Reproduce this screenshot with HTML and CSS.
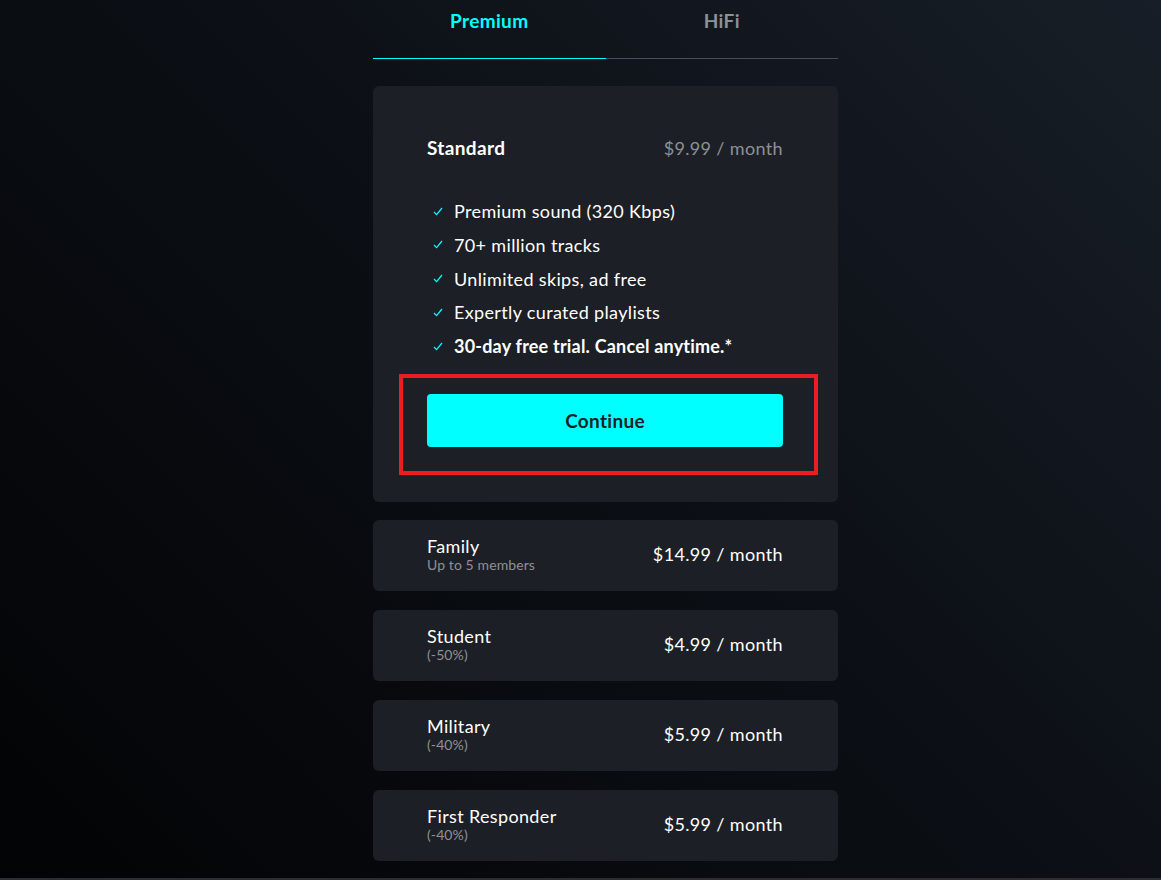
FILE: index.html
```html
<!DOCTYPE html>
<html lang="en">
<head>
    <meta charset="UTF-8">
    <meta name="viewport" content="width=device-width, initial-scale=1.0">
    <title>Choose a plan</title>
    <link rel="stylesheet" href="styles.css">
</head>
<body>

    <main class="plans">
        <nav class="tabs">
            <div class="tab active">Premium</div>
            <div class="tab">HiFi</div>
        </nav>

        <section class="card open">
            <div class="card-head">
                <span class="plan-name">Standard</span>
                <span class="plan-price muted">$9.99 / month</span>
            </div>

            <ul class="features">
                <li><svg class="check" viewBox="0 0 10 9"><polyline points="1,5 3.6,7.6 9,1"/></svg>Premium sound (320 Kbps)</li>
                <li><svg class="check" viewBox="0 0 10 9"><polyline points="1,5 3.6,7.6 9,1"/></svg>70+ million tracks</li>
                <li><svg class="check" viewBox="0 0 10 9"><polyline points="1,5 3.6,7.6 9,1"/></svg>Unlimited skips, ad free</li>
                <li><svg class="check" viewBox="0 0 10 9"><polyline points="1,5 3.6,7.6 9,1"/></svg>Expertly curated playlists</li>
                <li class="strong"><svg class="check" viewBox="0 0 10 9"><polyline points="1,5 3.6,7.6 9,1"/></svg>30-day free trial. Cancel anytime.*</li>
            </ul>

            <button class="continue-btn">Continue</button>
            <div class="highlight"></div>
        </section>

        <section class="card row">
            <div>
                <div class="plan-title">Family</div>
                <div class="plan-sub">Up to 5 members</div>
            </div>
            <span class="plan-price">$14.99 / month</span>
        </section>

        <section class="card row">
            <div>
                <div class="plan-title">Student</div>
                <div class="plan-sub">(-50%)</div>
            </div>
            <span class="plan-price">$4.99 / month</span>
        </section>

        <section class="card row">
            <div>
                <div class="plan-title">Military</div>
                <div class="plan-sub">(-40%)</div>
            </div>
            <span class="plan-price">$5.99 / month</span>
        </section>

        <section class="card row">
            <div>
                <div class="plan-title">First Responder</div>
                <div class="plan-sub">(-40%)</div>
            </div>
            <span class="plan-price">$5.99 / month</span>
        </section>
    </main>

</body>
</html>
```

FILE: styles.css
```css
html {
    background: linear-gradient(225deg, #181e27 0%, #0c1016 45%, #020304 100%);
    min-height: 100%;
}
body {
    font-family: Lato, "Noto Sans", sans-serif;
    letter-spacing: 0.35px;
    margin: 0;
    min-height: 100vh;
    box-sizing: border-box;
    border-bottom: 2px solid #2b2d31;
    color: white;
    display: flex;
    justify-content: center;
    padding-left: 50px;
}
.plans {
    width: 465px;
}
.tabs {
    display: flex;
    border-bottom: 1px solid #4a4d55;
}
.tab {
    flex: 1;
    text-align: center;
    font-size: 19px;
    font-weight: bold;
    color: #8e9196;
    padding: 10px 0 26px;
    margin-bottom: -1px;
    border-bottom: 1px solid transparent;
    line-height: 22px;
}
.tab.active {
    color: #00ffff;
    border-bottom-color: #00ffff;
}
.card {
    background: #1d1f26;
    border-radius: 6px;
    margin-top: 18px;
    box-sizing: border-box;
    padding: 0 55px 0 54px;
}
.card.open {
    position: relative;
    margin-top: 27px;
    padding-top: 51px;
    padding-bottom: 55px;
}
.card-head {
    display: flex;
    justify-content: space-between;
    font-size: 18px;
    line-height: 22px;
}
.plan-name {
    font-weight: bold;
    font-size: 19px;
}
.muted {
    color: #8e9196;
}
.features {
    list-style: none;
    margin: 41px 0 0;
    padding: 0;
}
.features li {
    display: flex;
    align-items: center;
    font-size: 18px;
    line-height: 22px;
    margin-bottom: 11.75px;
}
.features li.strong {
    font-weight: bold;
    letter-spacing: 0.2px;
}
.check {
    width: 10px;
    height: 9px;
    margin: 0 11px 0 6px;
    fill: none;
    stroke: #00ffff;
    stroke-width: 1.3;
}
.continue-btn {
    display: block;
    width: 100%;
    height: 53px;
    margin-top: 37px;
    background: #00ffff;
    border: none;
    border-radius: 4px;
    font-family: Lato, "Noto Sans", sans-serif;
    font-size: 19px;
    font-weight: bold;
    letter-spacing: 0.3px;
    color: #1d1f26;
    cursor: pointer;
}
.highlight {
    position: absolute;
    left: 26px;
    top: 288px;
    width: 419px;
    height: 101px;
    box-sizing: border-box;
    border: 4px solid #ec1c24;
    pointer-events: none;
}
.card.row {
    height: 71px;
    display: flex;
    align-items: center;
    justify-content: space-between;
    margin-top: 18px;
    padding-bottom: 4px;
}
.card.row + .card.row {
    margin-top: 19px;
}
.plan-title {
    font-size: 18px;
    line-height: 21px;
}
.plan-sub {
    font-size: 14px;
    line-height: 15px;
    color: #8e9196;
    letter-spacing: 0.1px;
}
.plan-price {
    font-size: 18px;
}
```
